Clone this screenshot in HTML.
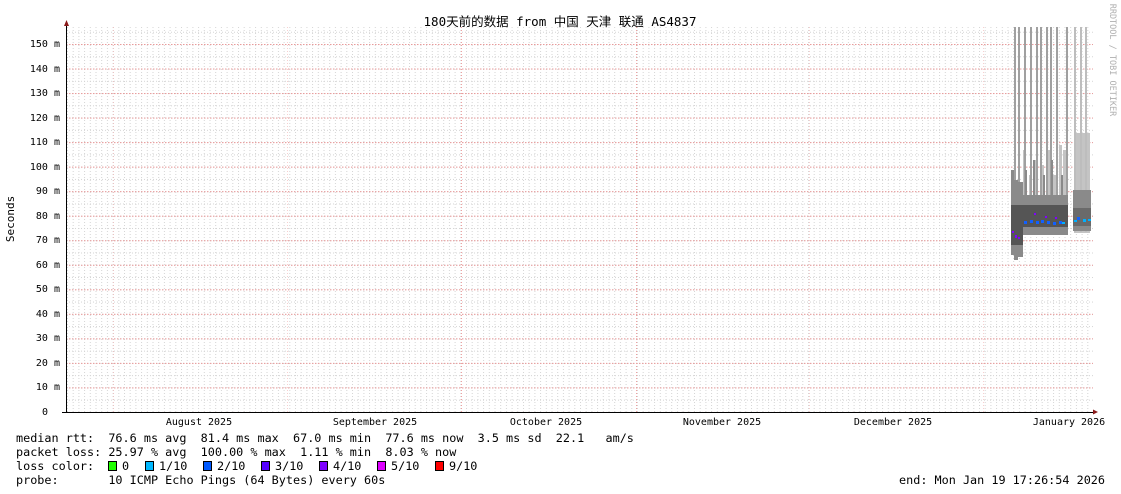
<!DOCTYPE html>
<html><head><meta charset="utf-8"><style>
html,body{margin:0;padding:0;background:#fff;width:1121px;height:494px;overflow:hidden}
svg text{font-family:"DejaVu Sans Mono","Liberation Mono","Noto Sans CJK SC",monospace;fill:#000;white-space:pre}
</style></head><body>
<svg width="1121" height="494" viewBox="0 0 1121 494" xmlns="http://www.w3.org/2000/svg">
<defs>
<pattern id="vg" x="67" y="0" width="5.7" height="3" patternUnits="userSpaceOnUse">
<rect x="0" y="0" width="1" height="1" fill="#d4d4d4"/>
</pattern>
<pattern id="hg" x="0" y="44" width="3" height="12.265" patternUnits="userSpaceOnUse">
<rect x="0" y="0" width="1" height="1" fill="#d4d4d4"/>
</pattern>
<pattern id="hr" x="0" y="44" width="3" height="24.53" patternUnits="userSpaceOnUse">
<rect x="0" y="0" width="1.5" height="1" fill="#e89a9a"/>
</pattern>
</defs>
<rect x="67" y="27" width="1026" height="385" fill="url(#vg)"/>
<rect x="67" y="27" width="1026" height="385" fill="url(#hg)"/>
<rect x="67" y="27" width="1026" height="385" fill="url(#hr)"/>
<g stroke="#f0a0a0" stroke-width="1" stroke-dasharray="1,2">
<line x1="113.5" y1="27" x2="113.5" y2="412" opacity=".5"/><line x1="287.5" y1="27" x2="287.5" y2="412" opacity=".5"/>
<line x1="461.5" y1="27" x2="461.5" y2="412"/><line x1="636.5" y1="27" x2="636.5" y2="412"/>
<line x1="809.5" y1="27" x2="809.5" y2="412" opacity=".5"/><line x1="983.5" y1="27" x2="983.5" y2="412" opacity=".5"/>
</g>
<g>
<g fill="#c4c4c4">
<rect x="1023" y="150" width="3" height="85"/><rect x="1029" y="175" width="3" height="60"/><rect x="1035" y="160" width="3" height="75"/>
<rect x="1041" y="165" width="3" height="70"/><rect x="1047" y="150" width="3" height="85"/><rect x="1053" y="175" width="3" height="60"/>
<rect x="1059" y="145" width="3" height="90"/><rect x="1063" y="150" width="3" height="85"/>
<rect x="1074" y="133" width="16" height="100"/>
</g>
<g fill="#a0a0a0">
<rect x="1014" y="27" width="2" height="230"/><rect x="1018" y="27" width="2" height="215"/><rect x="1024" y="27" width="2" height="205"/>
<rect x="1030" y="27" width="2" height="205"/><rect x="1036" y="27" width="2" height="205"/><rect x="1040" y="27" width="2" height="205"/>
<rect x="1046" y="27" width="2" height="205"/><rect x="1050" y="27" width="2" height="205"/><rect x="1056" y="27" width="2" height="205"/>
<rect x="1066" y="27" width="2" height="205"/>
</g>
<g fill="#bdbdbd"><rect x="1074" y="27" width="2" height="205"/><rect x="1080" y="27" width="2" height="205"/><rect x="1085" y="27" width="2" height="205"/></g>
<g fill="#8a8a8a">
<rect x="1011" y="170" width="3" height="85"/><rect x="1014" y="180" width="4" height="80"/><rect x="1018" y="182" width="5" height="75"/>
<rect x="1023" y="195" width="45" height="40"/><rect x="1025" y="170" width="2" height="30"/><rect x="1033" y="160" width="2" height="40"/>
<rect x="1043" y="175" width="2" height="25"/><rect x="1051" y="160" width="2" height="40"/><rect x="1061" y="175" width="2" height="25"/>
<rect x="1073" y="190" width="18" height="41"/>
</g>
<g fill="#555">
<rect x="1011" y="205" width="12" height="40"/>
<rect x="1023" y="205" width="45" height="22"/>
<rect x="1073" y="208" width="18" height="18" fill="#6a6a6a"/>
</g>
<g fill="#1060ff">
<rect x="1024" y="221" width="3" height="3"/><rect x="1030" y="220" width="3" height="3"/><rect x="1036" y="221" width="3" height="3"/><rect x="1041" y="220" width="3" height="3"/><rect x="1047" y="221" width="3" height="3"/><rect x="1053" y="222" width="3" height="3"/><rect x="1059" y="221" width="3" height="3"/>
<rect x="1077" y="217" width="3" height="3"/>
</g>
<g fill="#00b0ff">
<rect x="1062" y="222" width="3" height="2"/><rect x="1074" y="220" width="3" height="2"/><rect x="1083" y="219" width="3" height="3"/><rect x="1088" y="219" width="3" height="2"/>
</g>
<g fill="#8000ff">
<rect x="1012" y="231" width="2" height="2"/><rect x="1015" y="235" width="2" height="3"/><rect x="1018" y="237" width="2" height="2"/><rect x="1034" y="213" width="2" height="2"/><rect x="1045" y="216" width="2" height="2"/><rect x="1055" y="217" width="2" height="2"/>
</g>
</g>
<rect x="66" y="25" width="1" height="388" fill="#000"/>
<rect x="62" y="412" width="1033" height="1" fill="#000"/>
<polygon points="64,26 69,26 66.5,20" fill="#8b1a1a"/>
<polygon points="1093,409.5 1093,414.5 1098,412" fill="#8b1a1a"/>
<g font-size="10" text-anchor="end">
<text x="60" y="47">150 m</text><text x="60" y="72">140 m</text><text x="60" y="96">130 m</text><text x="60" y="121">120 m</text>
<text x="60" y="145">110 m</text><text x="60" y="170">100 m</text><text x="60" y="194">90 m</text><text x="60" y="219">80 m</text>
<text x="60" y="243">70 m</text><text x="60" y="268">60 m</text><text x="60" y="292">50 m</text><text x="60" y="317">40 m</text>
<text x="60" y="341">30 m</text><text x="60" y="366">20 m</text><text x="60" y="390">10 m</text><text x="48" y="415">0</text>
</g>
<g font-size="10" text-anchor="middle">
<text x="199" y="425">August 2025</text><text x="375" y="425">September 2025</text><text x="546" y="425">October 2025</text>
<text x="722" y="425">November 2025</text><text x="893" y="425">December 2025</text><text x="1069" y="425">January 2026</text>
</g>
<text x="14" y="219" font-size="11" text-anchor="middle" transform="rotate(-90 14 219)">Seconds</text>
<text x="1110" y="60" font-size="8.5" style="fill:#b0b0b0" text-anchor="middle" transform="rotate(90 1110 60)">RRDTOOL / TOBI OETIKER</text>
<text x="560" y="26" font-size="12.5" text-anchor="middle">180天前的数据 from 中国 天津 联通 AS4837</text>
<g font-size="11.8">
<text x="16" y="442">median rtt:  76.6 ms avg  81.4 ms max  67.0 ms min  77.6 ms now  3.5 ms sd  22.1   am/s</text>
<text x="16" y="456">packet loss: 25.97 % avg  100.00 % max  1.11 % min  8.03 % now</text>
<text x="16" y="470">loss color:</text>
<text x="16" y="484">probe:       10 ICMP Echo Pings (64 Bytes) every 60s</text>
<text x="1105" y="484" text-anchor="end">end: Mon Jan 19 17:26:54 2026</text>
</g>
<g stroke="#000" stroke-width="1">
<rect x="108.5" y="461.5" width="8" height="9" fill="#20ff00"/>
<rect x="145.5" y="461.5" width="8" height="9" fill="#00b8ff"/>
<rect x="203.5" y="461.5" width="8" height="9" fill="#0059ff"/>
<rect x="261.5" y="461.5" width="8" height="9" fill="#5500ff"/>
<rect x="319.5" y="461.5" width="8" height="9" fill="#7e00ff"/>
<rect x="377.5" y="461.5" width="8" height="9" fill="#dd00ff"/>
<rect x="435.5" y="461.5" width="8" height="9" fill="#ff0000"/>
</g>
<g font-size="11.8">
<text x="122" y="470">0</text><text x="159" y="470">1/10</text><text x="217" y="470">2/10</text><text x="275" y="470">3/10</text>
<text x="333" y="470">4/10</text><text x="391" y="470">5/10</text><text x="449" y="470">9/10</text>
</g>
</svg>
</body></html>
